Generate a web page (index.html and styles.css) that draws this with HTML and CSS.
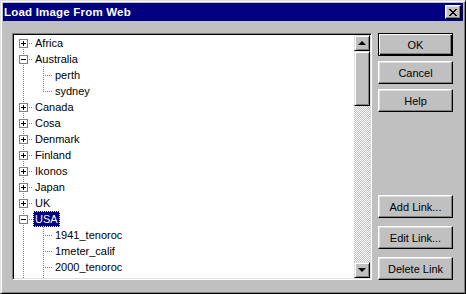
FILE: index.html
```html
<!DOCTYPE html>
<html lang="en">
<head>
    <meta charset="UTF-8">
    <title>Load Image From Web</title>
    <link rel="stylesheet" href="styles.css">
</head>
<body>
    <div class="window">
        <div class="titlebar">
            <span class="title">Load Image From Web</span>
            <button class="close-btn" aria-label="Close">
                <svg width="8" height="7" viewBox="0 0 8 7">
                    <path d="M0 0h2v1h1v1h2v-1h1v-1h2v1h-1v1h-1v1h-1v1h1v1h1v1h1v1h-2v-1h-1v-1h-2v1h-1v1h-2v-1h1v-1h1v-1h1v-1h-1v-1h-1v-1h-1z" fill="#000"/>
                </svg>
            </button>
        </div>

        <div class="content">
            <div class="listbox">
                <div class="tree">
                    <div class="row"><span class="conn root-first"><span class="box plus"></span></span><span class="label">Africa</span></div>
                    <div class="row"><span class="conn mid"><span class="box"></span></span><span class="label">Australia</span></div>
                    <div class="row"><span class="guide line"></span><span class="conn mid"></span><span class="label">perth</span></div>
                    <div class="row"><span class="guide line"></span><span class="conn last"></span><span class="label">sydney</span></div>
                    <div class="row"><span class="conn mid"><span class="box plus"></span></span><span class="label">Canada</span></div>
                    <div class="row"><span class="conn mid"><span class="box plus"></span></span><span class="label">Cosa</span></div>
                    <div class="row"><span class="conn mid"><span class="box plus"></span></span><span class="label">Denmark</span></div>
                    <div class="row"><span class="conn mid"><span class="box plus"></span></span><span class="label">Finland</span></div>
                    <div class="row"><span class="conn mid"><span class="box plus"></span></span><span class="label">Ikonos</span></div>
                    <div class="row"><span class="conn mid"><span class="box plus"></span></span><span class="label">Japan</span></div>
                    <div class="row"><span class="conn mid"><span class="box plus"></span></span><span class="label">UK</span></div>
                    <div class="row"><span class="conn mid"><span class="box"></span></span><span class="label selected">USA</span></div>
                    <div class="row"><span class="guide line"></span><span class="conn mid"></span><span class="label">1941_tenoroc</span></div>
                    <div class="row"><span class="guide line"></span><span class="conn mid"></span><span class="label">1meter_calif</span></div>
                    <div class="row"><span class="guide line"></span><span class="conn mid"></span><span class="label">2000_tenoroc</span></div>
                    <div class="row"><span class="guide line"></span><span class="guide line"></span></div>
                </div>
                <div class="scrollbar">
                    <div class="sb-btn"><span class="arrow up"></span></div>
                    <div class="sb-thumb"></div>
                    <div class="sb-track"></div>
                    <div class="sb-btn"><span class="arrow down"></span></div>
                </div>
            </div>

            <div class="buttons">
                <div class="btn-group top">
                    <button class="btn default">OK</button>
                    <button class="btn">Cancel</button>
                    <button class="btn">Help</button>
                </div>
                <div class="btn-group bottom">
                    <button class="btn">Add Link...</button>
                    <button class="btn">Edit Link...</button>
                    <button class="btn">Delete Link</button>
                </div>
            </div>
        </div>
    </div>
</body>
</html>
```

FILE: styles.css
```css
/* Win95-style dialog */
body {
    margin: 0;
    background-color: #c0c0c0;
    font-family: "Liberation Sans", Arial, sans-serif;
    font-size: 11px;
}
.window {
    width: 466px;
    height: 294px;
    box-sizing: border-box;
    background-color: #c0c0c0;
    border: 1px solid;
    border-color: #dfdfdf #000 #000 #dfdfdf;
    box-shadow: inset 1px 1px #fff, inset -1px -1px #808080;
    padding: 2px;
    display: flex;
    flex-direction: column;
    overflow: hidden;
}
.titlebar {
    height: 18px;
    background-color: #000080;
    display: flex;
    align-items: center;
    padding: 0 2px 0 1px;
    flex-shrink: 0;
}
.title {
    flex: 1;
    color: #fff;
    font-weight: bold;
    font-size: 11.5px;
    letter-spacing: 0.2px;
}
.close-btn {
    width: 16px;
    height: 14px;
    padding: 0;
    box-sizing: border-box;
    background-color: #c0c0c0;
    border: 1px solid;
    border-color: #fff #000 #000 #fff;
    box-shadow: inset -1px -1px #808080, inset 1px 1px #dfdfdf;
    display: flex;
    align-items: center;
    justify-content: center;
}
.close-btn svg {
    display: block;
}
.content {
    height: 270px;
    box-sizing: border-box;
    display: flex;
    gap: 6px;
    padding: 12px 10px 11px 9px;
}
.listbox {
    width: 360px;
    height: 247px;
    box-sizing: border-box;
    border: 1px solid;
    border-color: #808080 #fff #fff #808080;
    box-shadow: inset 1px 1px #000, inset -1px -1px #dfdfdf;
    padding: 1px;
    display: flex;
    background-color: #fff;
    overflow: hidden;
}
.tree {
    flex: 1;
    min-height: 0;
    overflow: hidden;
    background-color: #fff;
}
.row {
    height: 16px;
    display: flex;
}
/* tree connector lines, dotted gray */
.guide, .conn {
    flex-shrink: 0;
    height: 16px;
    display: flex;
    background-repeat: no-repeat;
}
.guide {
    width: 20px;
}
.guide.line {
    background-image: repeating-linear-gradient(to bottom, #808080 0 1px, transparent 1px 2px);
    background-position: 9px 0;
    background-size: 1px 16px;
}
.conn {
    width: 19px;
    background-image:
        repeating-linear-gradient(to right, #808080 0 1px, transparent 1px 2px),
        repeating-linear-gradient(to bottom, #808080 0 1px, transparent 1px 2px);
    background-position: 9px 8px, 9px 0;
    background-size: 10px 1px, 1px 16px;
}
.conn.last {
    background-size: 10px 1px, 1px 9px;
}
.conn.root-first {
    background-position: 9px 8px, 9px 8px;
    background-size: 10px 1px, 1px 8px;
}
.box {
    width: 9px;
    height: 9px;
    box-sizing: border-box;
    margin: 4px 0 0 5px;
    border: 1px solid #808080;
    background: linear-gradient(#000, #000) center / 5px 1px no-repeat, #fff;
}
.box.plus {
    background:
        linear-gradient(#000, #000) center / 5px 1px no-repeat,
        linear-gradient(#000, #000) center / 1px 5px no-repeat,
        #fff;
}
.label {
    height: 16px;
    box-sizing: border-box;
    line-height: 14px;
    padding: 0 1px;
    border: 1px solid transparent;
    color: #000;
    white-space: nowrap;
}
.label.selected {
    background-color: #000080;
    color: #fff;
    border: 1px dotted #ffff80;
}
.scrollbar {
    width: 16px;
    flex-shrink: 0;
    display: flex;
    flex-direction: column;
}
.sb-btn, .sb-thumb {
    flex-shrink: 0;
    box-sizing: border-box;
    background-color: #c0c0c0;
    border: 1px solid;
    border-color: #dfdfdf #000 #000 #dfdfdf;
    box-shadow: inset 1px 1px #fff, inset -1px -1px #808080;
}
.sb-btn {
    height: 16px;
    display: flex;
    align-items: center;
    justify-content: center;
}
.sb-thumb {
    height: 55px;
}
.sb-track {
    flex: 1;
    background: repeating-conic-gradient(#c0c0c0 0 25%, #fff 0 50%) 0 0 / 2px 2px;
}
.arrow {
    width: 0;
    height: 0;
    border-left: 4px solid transparent;
    border-right: 4px solid transparent;
}
.arrow.up {
    border-bottom: 4px solid #000;
}
.arrow.down {
    border-top: 4px solid #000;
}
.buttons {
    width: 75px;
    display: flex;
    flex-direction: column;
    justify-content: space-between;
}
.btn-group {
    display: flex;
    flex-direction: column;
}
.btn-group.top {
    gap: 5px;
}
.btn-group.bottom {
    gap: 8px;
}
.btn {
    width: 75px;
    height: 23px;
    box-sizing: border-box;
    padding: 0;
    font-family: "Liberation Sans", Arial, sans-serif;
    font-size: 11px;
    color: #000;
    background-color: #c0c0c0;
    border: 1px solid;
    border-color: #fff #000 #000 #fff;
    box-shadow: inset -1px -1px #808080, inset 1px 1px #dfdfdf;
}
.btn.default {
    border-color: #000;
    box-shadow: inset 1px 1px #fff, inset -1px -1px #000, inset -2px -2px #808080;
}
```
